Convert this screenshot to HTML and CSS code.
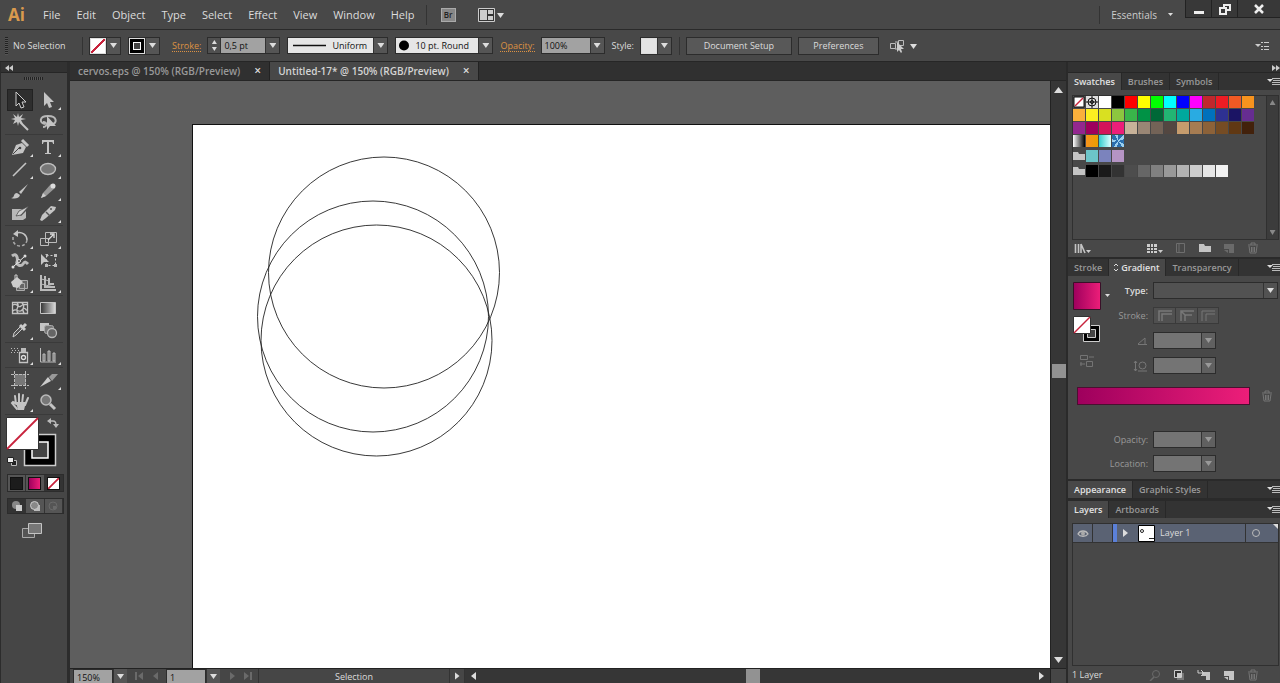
FILE: index.html
```html
<!DOCTYPE html>
<html lang="en">
<head>
<meta charset="utf-8">
<title>Untitled-17* @ 150% (RGB/Preview)</title>
<link rel="stylesheet" href="styles.css">
</head>
<body>
<svg class="sprite" aria-hidden="true">
  <symbol id="menu" viewBox="0 0 13 9"><path d="M0 2h6L3 5z" fill="#ddd"/><path d="M5 1.5h8M6 3.5h7M5 5.5h8M5 7.5h8" stroke="#bbb"/></symbol>
  <symbol id="trash" viewBox="0 0 12 12"><path d="M1 3h10M4 3V1h4v2M2 4l1 7h6l1-7M4.500 5v5M6 5v5M7.500 5v5" fill="none" stroke="#757575"/></symbol>
  <symbol id="folder" viewBox="0 0 12 10"><path d="M0 1h5l1 2h6v6H0z" fill="#c4c4c4"/></symbol>
  <symbol id="page" viewBox="0 0 12 12"><path d="M1 2h10v9H6V7H1z" fill="currentColor"/><path d="M1 8h4v3z" fill="currentColor"/></symbol>
</svg>

<header class="menubar">
  <span class="logo">Ai</span>
  <nav class="menus">
    <button>File</button><button>Edit</button><button>Object</button><button>Type</button><button>Select</button><button>Effect</button><button>View</button><button>Window</button><button>Help</button>
  </nav>
  <button class="bridge">Br</button>
  <button class="arrange" aria-label="Arrange documents"><svg width="26" height="14" viewBox="0 0 26 14"><path d="M.5.500h16v13H.500z" fill="#333" stroke="#ccc"/><path d="M2 2h7v10H2zM10 2h5v4h-5zM10 8h5v4h-5z" fill="#ccc"/><path d="M19 5h7l-3.500 5z" fill="#ddd"/></svg></button>
  <button class="workspace">Essentials<i class="tri small"></i></button>
  <div class="window-buttons">
    <button aria-label="Minimize"><svg width="12" height="12"><path d="M1 8h10v3H1z" fill="#eee"/></svg></button>
    <button aria-label="Restore"><svg width="12" height="12" fill="none" stroke="#eee" stroke-width="2"><path d="M5 5V2h6v5H8"/><path d="M1 5h6v6H1z"/></svg></button>
    <button aria-label="Close" class="close"><svg width="12" height="12"><path d="M2 2l8 8M10 2l-8 8" stroke="#eee" stroke-width="2.500"/></svg></button>
  </div>
</header>

<section class="controlbar">
  <i class="grip"></i>
  <span class="selection">No Selection</span>
  <button class="swatch-drop" aria-label="Fill"><i class="chip none"></i><b><i class="tri"></i></b></button>
  <button class="swatch-drop" aria-label="Stroke color"><i class="chip ring"></i><b><i class="tri"></i></b></button>
  <label class="link stroke-label" for="weight">Stroke:</label>
  <div class="field"><button class="spin" aria-label="Step weight"><i class="tri up"></i><i class="tri"></i></button><input id="weight" class="weight" value="0,5 pt"><button class="arrow" aria-label="Weights"><i class="tri"></i></button></div>
  <div class="field profile"><svg width="38" height="15"><path d="M5 7.500h33" stroke="#111" stroke-width="1.500"/></svg><select aria-label="Width profile"><option>Uniform</option></select><span class="arrow"><i class="tri"></i></span></div>
  <div class="field brush"><svg width="15" height="15"><circle cx="8" cy="7.500" r="5" fill="#000"/></svg><select aria-label="Brush"><option>10 pt. Round</option></select><span class="arrow"><i class="tri"></i></span></div>
  <label class="link" for="opacity">Opacity:</label>
  <div class="field opacity"><input id="opacity" value="100%"><button class="arrow" aria-label="Opacity values"><i class="tri"></i></button></div>
  <span class="style-label">Style:</span>
  <button class="swatch-drop" aria-label="Style"><i class="chip plain"></i><b><i class="tri"></i></b></button>
  <div class="actions"><button class="push setup">Document Setup</button><button class="push">Preferences</button></div>
  <button class="similar" aria-label="Select similar"><svg width="28" height="14" viewBox="0 0 28 14"><path d="M1.500 4.500h5v5h-5zM9.500 1.500h5v5h-5zM6 3h4M6 10h3" fill="none" stroke="#bbb"/><path d="M8 3v10l2-2 2 3 1-1-1-3h3z" fill="#ccc"/><path d="M21 5h7l-3.500 5z" fill="#ddd"/></svg></button>
  <button class="bar-menu" aria-label="Control menu"><svg width="14" height="10"><path d="M0 3h6L3 6z" fill="#ccc"/><path d="M6 1.500h2M6 5.500h2M6 8.500h2M9 1.500h5M9 5.500h5M9 8.500h5" stroke="#ccc"/></svg></button>
</section>

<main class="workarea">
  <aside class="toolbox">
    <div class="dock-head"><svg width="8" height="6"><path d="M4 0v6L0 3zM8 0v6L4 3z" fill="#ccc"/></svg></div>
    <i class="hgrip"></i>
    <div class="tools">
      <div class="group">
        <button class="on" aria-label="Selection"><svg viewBox="0 0 20 20"><path d="M6 2v14l3-3 2 5 3-1-2-5h4z" fill="#222" stroke="#ccc"/></svg></button>
        <button class="fly" aria-label="Direct selection"><svg viewBox="0 0 20 20"><path d="M6 2v14l3-3 2 5 3-1-2-5h4z" fill="#c4c4c4"/></svg></button>
        <button aria-label="Magic wand"><svg viewBox="0 0 20 20"><path d="M8 1l1 4 4-3-2 4 5 1-5 1 2 4-4-2-1 4-1-4-4 2 2-4-4-1 4-1-2-4 4 3z" fill="#c4c4c4"/><path d="M10 10l8 8" stroke="#c4c4c4" stroke-width="2"/></svg></button>
        <button aria-label="Lasso"><svg viewBox="0 0 20 20"><path d="M7 12c-6-1-6-8 3-8 10 0 9 8 4 8M5 10c5 0 4 5 0 5" fill="none" stroke="#b8b8b8" stroke-width="2"/><path d="M9 4v14l3-4h6z" fill="#c4c4c4"/></svg></button>
      </div>
      <div class="group pens">
        <button class="fly" aria-label="Pen"><svg viewBox="0 0 20 20"><path d="M2 18l4-10 6-2 4 4-3 6z" fill="#c4c4c4"/><path d="M3 17l6-6" stroke="#444"/><circle cx="10" cy="11" r="1.300" fill="#444"/><path d="M12 3l6 6" stroke="#c4c4c4" stroke-width="3"/></svg></button>
        <button class="fly type" aria-label="Type"><svg viewBox="0 0 20 20"><path d="M4 3h12v4h-1c0-2-1-2-3-2h-1v10c0 1 0 1 2 1v1H7v-1c2 0 2 0 2-1V5H8C6 5 5 5 5 7H4z" fill="#c4c4c4"/></svg></button>
        <button class="fly" aria-label="Line"><svg viewBox="0 0 20 20"><path d="M3 17L16 4" stroke="#c4c4c4" stroke-width="1.600"/></svg></button>
        <button class="fly" aria-label="Ellipse"><svg viewBox="0 0 20 20"><ellipse cx="10" cy="10" rx="7.500" ry="5.500" fill="#777" stroke="#c0c0c0" stroke-width="1.300"/></svg></button>
        <button aria-label="Paintbrush"><svg viewBox="0 0 20 20"><path d="M18 3l-7 10-2-2z" fill="#c4c4c4"/><path d="M1 17c4 0 2-5 6-5l3 2c-1 4-6 4-9 3z" fill="#c4c4c4"/></svg></button>
        <button class="fly" aria-label="Pencil"><svg viewBox="0 0 20 20"><path d="M3 17l2-5 8-9 4 4-9 8z" fill="#999"/><path d="M3 17l2-5 3 3z" fill="#ccc"/><circle cx="15" cy="5" r="2.500" fill="#ddd"/></svg></button>
        <button aria-label="Blob brush"><svg viewBox="0 0 20 20"><path d="M2 6h12l-5 5 2 2 5-5v7l-3 2H2z" fill="#b8b8b8"/><path d="M19 3l-8 9-5 1 3-5z" fill="#d0d0d0" stroke="#444" stroke-width=".7"/></svg></button>
        <button class="fly" aria-label="Eraser"><svg viewBox="0 0 20 20"><path d="M2 17l2-5 9-9 5 1-1 3-9 8-4 3z" fill="#c4c4c4"/><path d="M8 9l4 4" stroke="#555" stroke-width="1.500"/><circle cx="13" cy="6" r="1" fill="#555"/></svg></button>
      </div>
      <div class="group">
        <button class="fly" aria-label="Rotate"><svg viewBox="0 0 20 20"><path d="M6 4c6-2 11 2 11 7" fill="none" stroke="#c4c4c4" stroke-width="1.500"/><path d="M17 11c-1 8-14 8-14-1V7" fill="none" stroke="#aaa" stroke-width="1.500" stroke-dasharray="3 2"/><path d="M3 5l5-4v7z" fill="#c4c4c4"/></svg></button>
        <button class="fly" aria-label="Scale"><svg viewBox="0 0 20 20"><path d="M7.500 3.500h11v10h-11zM2.500 9.500h8v7h-8z" fill="none" stroke="#bbb"/><path d="M10 11l5-5M12 5h4v4" fill="none" stroke="#ddd" stroke-width="1.300"/></svg></button>
        <button class="fly" aria-label="Width"><svg viewBox="0 0 20 20"><path d="M2 5c5-4 6 3 5 6s4 5 6 2 3-2 5 0" fill="none" stroke="#bbb" stroke-width="3"/><path d="M3 16L15 5" stroke="#eee"/><circle cx="3" cy="16" r="1.500" fill="#ddd"/><circle cx="9" cy="10" r="1.500" fill="#444" stroke="#ddd"/><circle cx="15" cy="5" r="1.500" fill="#ddd"/></svg></button>
        <button aria-label="Free transform"><svg viewBox="0 0 20 20"><path d="M3 3v11l3-3h5z" fill="#c4c4c4"/><path d="M8.500 4.500h9v10h-9z" fill="none" stroke="#ccc" stroke-dasharray="2 2"/><path d="M7 3h3v3M16 3h3v3h-3zM16 13h3v3h-3zM7 13h3v3H7z" fill="#bbb"/></svg></button>
        <button class="fly" aria-label="Shape builder"><svg viewBox="0 0 20 20"><path d="M9.500 7.500h8v8h-8zM6.500 10.500h8v7h-8z" fill="#666" stroke="#aaa"/><path d="M1 9l6-5 6 5-5 6-5-1z" fill="#ccc"/><path d="M5 7V2h2v5" fill="none" stroke="#ccc"/></svg></button>
        <button class="fly" aria-label="Perspective grid"><svg viewBox="0 0 20 20"><path d="M3 2v15h15M7 3v11h10M11 5v6h5" fill="none" stroke="#bbb" stroke-width="2"/><path d="M3 6l9 2M3 11l13 3" stroke="#bbb"/></svg></button>
      </div>
      <div class="group">
        <button aria-label="Mesh"><svg viewBox="0 0 20 20"><path d="M2.500 4.500h15v11h-15zM3 7c4-3 5 4 8 1s4 0 7-2M3 13c3-4 6 3 9-1s4 1 5 0M7 5c4 3-3 6 1 10M12 5c5 4-2 5 2 10" fill="none" stroke="#c4c4c4" stroke-width="1.300"/></svg></button>
        <button aria-label="Gradient"><svg viewBox="0 0 20 20"><defs><linearGradient id="gt"><stop stop-color="#333"/><stop offset="1" stop-color="#ddd"/></linearGradient></defs><path d="M2.500 4.500h15v11h-15z" fill="url(#gt)" stroke="#c4c4c4"/></svg></button>
        <button class="fly" aria-label="Eyedropper"><svg viewBox="0 0 20 20"><path d="M3 17l1-4 7-7 2 2-7 7z" fill="#555" stroke="#ccc"/><path d="M10 5l5 5M12 8l4-4" stroke="#ccc" stroke-width="3"/></svg></button>
        <button aria-label="Blend"><svg viewBox="0 0 20 20"><path d="M2 3h9v8H2z" fill="#c4c4c4"/><rect x="6.500" y="5.500" width="9" height="8" rx="2" fill="#777" stroke="#aaa"/><circle cx="14" cy="13" r="4.500" fill="#666" stroke="#bbb" stroke-width="1.300"/></svg></button>
      </div>
      <div class="group">
        <button class="fly" aria-label="Symbol sprayer"><svg viewBox="0 0 20 20"><path d="M9.500 7.500h8v10h-8z" fill="#444" stroke="#c4c4c4" stroke-width="1.300"/><path d="M11 3h5v4h-5z" fill="#bbb"/><circle cx="13.500" cy="12.500" r="2" fill="none" stroke="#ddd" stroke-width="1.300"/><path d="M1 3.500h9M2 5.500h8M1 7.500h7" stroke="#bbb" stroke-dasharray="1 2"/></svg></button>
        <button class="fly" aria-label="Column graph"><svg viewBox="0 0 20 20"><path d="M2.500 3v14H18" fill="none" stroke="#bbb"/><path d="M5 9h2v7H5zM10 6h2v10h-2zM15 8h2v8h-2z" fill="#777" stroke="#bbb"/></svg></button>
      </div>
      <div class="group">
        <button aria-label="Artboard"><svg viewBox="0 0 20 20"><path d="M5 4h11v11H5z" fill="#777"/><path d="M4.500 1v18M15.500 1v18M1 4.500h18M1 15.500h18" stroke="#bbb" stroke-dasharray="3 1"/></svg></button>
        <button class="fly" aria-label="Slice"><svg viewBox="0 0 20 20"><path d="M2 17L10 7l3 4z" fill="#ccc"/><path d="M11 7l3-3h6l-6 7z" fill="#999"/></svg></button>
        <button class="fly" aria-label="Hand"><svg viewBox="0 0 20 20"><path d="M7 17L2 11l1-1 4 2M6 12L5 4M9 12V2M12 12l1-9M15 13l3-7" fill="none" stroke="#c4c4c4" stroke-width="2" stroke-linecap="round"/><path d="M6 10h10l-2 8H8z" fill="#c4c4c4"/></svg></button>
        <button aria-label="Zoom"><svg viewBox="0 0 20 20"><circle cx="8" cy="8" r="5" fill="#777" stroke="#bbb" stroke-width="1.500"/><path d="M12 12l5 5" stroke="#c4c4c4" stroke-width="3"/></svg></button>
      </div>
      <svg class="paint" width="58" height="54" viewBox="0 0 58 54">
        <path d="M19.500 18.500h31v31h-31z" fill="#000" stroke="#ccc" stroke-width="1.500"/><path d="M27 26h16v16H27z" fill="#444" stroke="#fff" stroke-width="1.500"/>
        <path d="M1.500 1.500h32v32h-32z" fill="#fff" stroke="#333"/><path d="M2 33L33 2" stroke="#c8233c" stroke-width="1.800"/>
        <path d="M45 5h3c2 0 3 1 3 4" fill="none" stroke="#bbb" stroke-width="1.300"/><path d="M42 5l4-3v6zM48 8h6l-3 4z" fill="#bbb"/>
        <path d="M6.500 44.500h5v5h-5z" fill="#222" stroke="#bbb"/><path d="M2.500 41.500h6v5h-6z" fill="#eee" stroke="#222"/>
      </svg>
      <div class="seg">
        <button aria-label="Color"><i class="sq dark"></i></button><button aria-label="Gradient fill"><i class="sq pink"></i></button><button class="down" aria-label="None"><i class="sq none"></i></button>
      </div>
      <div class="seg modes">
        <button class="down" aria-label="Draw normal"><svg width="12" height="12"><circle cx="5" cy="5" r="4" fill="#888"/><path d="M5 5h6v6H5z" fill="#ccc"/></svg></button><button aria-label="Draw behind"><svg width="12" height="12"><path d="M5 5h6v6H5z" fill="#bbb"/><circle cx="5.500" cy="5.500" r="4" fill="#888" stroke="#ccc"/></svg></button><button aria-label="Draw inside"><svg width="12" height="12"><circle cx="6" cy="6" r="4" fill="none" stroke="#6a6a6a"/><path d="M6 6h3v3H6z" fill="#6a6a6a"/></svg></button>
      </div>
      <button class="screen" aria-label="Screen mode"><svg width="22" height="17"><path d="M1.500 6.500h12v9h-12z" fill="#555" stroke="#aaa"/><path d="M7.500 1.500h13v10h-13z" fill="#777" stroke="#c4c4c4"/></svg></button>
    </div>
  </aside>

  <section class="document">
    <div class="doc-tabs">
      <button>cervos.eps @ 150% (RGB/Preview)<span>×</span></button><button class="active">Untitled-17* @ 150% (RGB/Preview)<span>×</span></button>
    </div>
    <div class="canvas">
      <div class="artboard">
        <svg width="340" height="360" fill="none" stroke="#222" stroke-width=".9"><circle cx="191" cy="147.500" r="115.500"/><circle cx="180" cy="191.500" r="115.500"/><circle cx="183.500" cy="215.500" r="115.500"/></svg>
      </div>
      <div class="vscroll"><i class="tri up"></i><i class="thumb"></i><i class="tri"></i></div>
    </div>
    <footer class="status">
      <input class="zoom" aria-label="Zoom level" value="150%"><button class="arrow" aria-label="Zoom levels"><i class="tri"></i></button>
      <button class="nav" aria-label="Previous artboard"><svg width="26" height="8"><path d="M1 0h2v8H1zM9 0v8L4 4zM24 0v8l-5-4z" fill="#6a6a6a"/></svg></button>
      <input class="board" aria-label="Artboard" value="1"><button class="arrow" aria-label="Artboards"><i class="tri"></i></button>
      <button class="nav next" aria-label="Next artboard"><svg width="26" height="8"><path d="M2 0v8l5-4zM16 0v8l5-4zM22 0h2v8h-2z" fill="#6a6a6a"/></svg></button>
      <span class="info">Selection</span>
      <button class="play" aria-label="Status menu"><i class="tri right"></i></button>
      <div class="hscroll"><i class="tri left"></i><i class="thumb"></i><i class="tri right"></i></div>
      <i class="corner"></i>
    </footer>
  </section>

  <aside class="panels">
    <div class="dock-head right"><svg width="8" height="6"><path d="M0 0v6l4-3zM4 0v6l4-3z" fill="#ccc"/></svg></div>
    <section class="panel">
      <div class="tabs"><button class="active">Swatches</button><button>Brushes</button><button>Symbols</button><svg class="pm"><use href="#menu"/></svg></div>
      <div class="swatch-body">
        <div class="swatch-box"><div class="swatches"></div><div class="mini-scroll"><i class="tri up"></i><i class="tri"></i></div></div>
        <div class="tools-row">
          <svg width="17" height="11"><path d="M1.500 1v9M4.500 1v9M7 1l4 9M7 1v9" stroke="#c4c4c4" stroke-width="1.600"/><path d="M12 7h5l-2.500 3z" fill="#ccc"/></svg>
          <svg class="push-right" width="17" height="11"><path d="M1 1h10v9H1z" fill="#ccc"/><path d="M4.500 1v9M7.500 1v9M1 4.500h10M1 7.500h10" stroke="#444"/><path d="M12 7h5l-2.500 3z" fill="#ccc"/></svg>
          <svg width="12" height="12"><path d="M1.500 1.500h8v9h-8zM4 1v10" fill="none" stroke="#6e6e6e"/></svg>
          <svg width="12" height="10"><use href="#folder"/></svg>
          <svg class="dim" width="12" height="12"><use href="#page"/></svg>
          <svg width="12" height="12"><use href="#trash"/></svg>
        </div>
      </div>
    </section>
    <section class="panel">
      <div class="tabs"><button>Stroke</button><button class="active grad"><svg width="6" height="9"><path d="M1 3l2-2 2 2M1 6l2 2 2-2" fill="none" stroke="#ddd"/></svg>Gradient</button><button>Transparency</button><svg class="pm"><use href="#menu"/></svg></div>
      <div class="gradient-body">
        <div class="form">
          <svg class="preview" width="40" height="88" viewBox="0 0 40 88"><defs><linearGradient id="pk"><stop stop-color="#9e005d"/><stop offset="1" stop-color="#ed1e79"/></linearGradient></defs>
            <path d="M.5.500h27v27H.500z" fill="url(#pk)" stroke="#3a1028"/><path d="M32 12h5l-2.500 3z" fill="#ddd"/>
            <path d="M10.500 43.500h16v16h-16z" fill="#000" stroke="#ccc"/><path d="M14.500 47.500h8v8h-8z" fill="#444" stroke="#ccc"/><path d="M.5 34.500h17v17H.500z" fill="#fff" stroke="#333"/><path d="M1 51l16-16" stroke="#c8233c" stroke-width="1.500"/>
            <path d="M7.500 73.500h7v4h-7zM13.500 79.500h6v5h-6zM16 75h5M7 82h5M8 80v4" fill="none" stroke="#747474"/></svg>
          <label class="lit" for="gtype">Type:</label><div class="field wide"><select id="gtype"><option></option></select><span class="arrow"><i class="tri"></i></span></div>
          <span>Stroke:</span><div class="joins"><button aria-label="Within stroke"><svg width="16" height="13"><path d="M2 12V2h13M5 12V5h10" fill="none" stroke="#777" stroke-width="1.500"/></svg></button><button aria-label="Along stroke"><svg width="16" height="13"><path d="M2 12V2h13M6 12V6h7M2 2l5 5" fill="none" stroke="#777" stroke-width="1.500"/></svg></button><button aria-label="Across stroke"><svg width="16" height="13"><path d="M2 12V2h13M6 12V5h9" fill="none" stroke="#777"/></svg></button></div>
          <span><svg width="11" height="10"><path d="M1 8.500h9M1 8l7-6v7" fill="none" stroke="#777"/></svg></span><div class="field off"><input aria-label="Angle"><span class="arrow"><i class="tri"></i></span></div>
          <span><svg width="15" height="12"><path d="M2.500 1v10M1 3l1.500-2L4 3M1 9l1.500 2L4 9M5 11h9" fill="none" stroke="#777"/><circle cx="9.500" cy="5.500" r="3.500" fill="none" stroke="#777"/></svg></span><div class="field off"><input aria-label="Aspect ratio"><span class="arrow"><i class="tri"></i></span></div>
        </div>
        <div class="ramp-row"><div class="ramp"></div><svg width="12" height="12"><use href="#trash"/></svg></div>
        <div class="form lower">
          <label for="gop">Opacity:</label><div class="field off"><input id="gop"><span class="arrow"><i class="tri"></i></span></div>
          <label for="gloc">Location:</label><div class="field off"><input id="gloc"><span class="arrow"><i class="tri"></i></span></div>
        </div>
      </div>
    </section>
    <section class="panel">
      <div class="tabs"><button class="active">Appearance</button><button>Graphic Styles</button><svg class="pm"><use href="#menu"/></svg></div>
    </section>
    <section class="panel layers">
      <div class="tabs"><button class="active">Layers</button><button>Artboards</button><svg class="pm"><use href="#menu"/></svg></div>
      <div class="layers-body">
        <div class="layer-list">
          <div class="layer">
            <button class="eye" aria-label="Visibility"><svg width="12" height="9"><path d="M1 5c2-4 8-4 10 0-2 3-8 3-10 0z" fill="none" stroke="#bbb" stroke-width="1.300"/><circle cx="6" cy="4.500" r="2" fill="#aaa"/></svg></button>
            <button class="lock" aria-label="Lock"></button>
            <i class="mark"></i><i class="tri right"></i>
            <svg class="thumbnail" width="17" height="17"><path d="M.5.500h16v16H.500z" fill="#fff" stroke="#000"/><circle cx="4" cy="6" r="1.500" fill="none" stroke="#222"/><path d="M11 13.500h5" stroke="#222"/></svg>
            <span class="name">Layer 1</span>
            <button class="target" aria-label="Target"><svg width="10" height="10"><circle cx="5" cy="5" r="3.500" fill="none" stroke="#bbb"/></svg></button>
            <i class="selected-art"></i>
          </div>
        </div>
        <div class="tools-row layer-tools">
          <span>1 Layer</span>
          <svg class="push-right" width="12" height="12"><circle cx="7" cy="5" r="3.500" fill="none" stroke="#6a6a6a"/><path d="M5 8l-4 4" stroke="#6a6a6a" stroke-width="1.500"/></svg>
          <svg width="12" height="12"><path d="M4 4h7v7H4z" fill="#777"/><path d="M1.500 1.500h7v7h-7z" fill="#333" stroke="#ccc"/><path d="M4 4h4v4H4z" fill="#ccc"/></svg>
          <svg width="14" height="12"><path d="M5 3h8v8H9V7H5z" fill="#c4c4c4"/><path d="M1 1v3h5M4 1l3 3-3 3" fill="none" stroke="#ccc"/></svg>
          <svg class="bright" width="12" height="12"><use href="#page"/></svg>
          <svg width="12" height="12"><use href="#trash"/></svg>
        </div>
      </div>
    </section>
  </aside>
</main>
<script src="script.js"></script>
</body>
</html>
```
FILE: styles.css
```css
* { box-sizing: border-box; }
html, body { height: 100%; }
body {
  margin: 0; display: flex; flex-direction: column; overflow: hidden;
  background: #484848; color: #dcdcdc;
  font: 9px/12px "Open Sans", "Noto Sans", sans-serif;
}
button, input, select { font: inherit; color: inherit; background: none; border: 0; padding: 0; margin: 0; border-radius: 0; }
button { display: inline-flex; align-items: center; justify-content: center; white-space: nowrap; }
input, select { min-width: 0; outline: 0; }
select { appearance: none; }
svg { display: block; flex: none; }
.sprite { position: absolute; width: 0; height: 0; }

.tri { display: block; width: 7px; height: 5px; background: #ddd; clip-path: polygon(0 0, 100% 0, 50% 100%); }
.tri.small { width: 5px; height: 3px; }
.tri.up { clip-path: polygon(50% 0, 100% 100%, 0 100%); }
.tri.right { width: 5px; height: 8px; clip-path: polygon(0 0, 100% 50%, 0 100%); }
.tri.left { width: 5px; height: 8px; clip-path: polygon(100% 0, 100% 100%, 0 50%); }

/* Menu bar */
.menubar { display: flex; align-items: center; height: 30px; flex: none; border-bottom: 1px solid #2a2a2a; font-size: 11px; line-height: 16px; }
.logo { width: 36px; padding-left: 8px; color: #d99a4e; font: bold 17px/24px "Open Sans", sans-serif; }
.menus { display: flex; gap: 16px; padding: 0 11px 0 7px; height: 20px; border-right: 1px solid #333; }
.bridge { width: 15px; height: 14px; margin: 0 22px 0 14px; background: #888; border: 1px solid #aaa; color: #222; font-size: 8px; font-weight: 600; }
.workspace { margin-left: auto; height: 18px; padding: 0 12px 0 11px; gap: 11px; border-left: 1px solid #333; font-size: 10px; color: #ccc; }
.window-buttons { display: flex; align-self: flex-start; height: 18px; border: 1px solid #222; border-width: 0 0 1px 1px; background: #383838; }
.window-buttons button { width: 26px; border-right: 1px solid #222; }
.window-buttons .close { width: 42px; border: 0; }

/* Control bar */
.controlbar { display: flex; align-items: center; height: 32px; flex: none; padding: 0 11px 0 5px; border-bottom: 1px solid #262626; }
.grip { width: 3px; height: 18px; margin-right: 5px; background: repeating-linear-gradient(#222 0 1px, #555 1px 2px); }
.selection { width: 70px; height: 18px; line-height: 18px; border-right: 1px solid #333; margin-right: 6px; white-space: nowrap; }
.swatch-drop { height: 18px; margin-right: 7px; border: 1px solid #2c2c2c; background: #555; }
.swatch-drop b { width: 14px; display: flex; justify-content: center; border-left: 1px solid #333; height: 16px; align-items: center; }
.chip { width: 16px; height: 16px; border: 1px solid #ddd; }
.none { background: linear-gradient(to bottom right, #fff 44%, #c8233c 46% 54%, #fff 56%); }
.ring { background: #fff; border: 1px solid #ddd; box-shadow: inset 0 0 0 3px #000, inset 0 0 0 4px #fff, inset 0 0 0 9px #444; }
.plain { background: #e4e4e4; }
.link { color: #dd9243; border-bottom: 1px dotted #dd9243; line-height: 11px; margin-right: 6px; }
.stroke-label { margin-left: 5px; }
.field { display: flex; height: 17px; border: 1px solid #2c2c2c; background: #a2a2a2; color: #111; margin-right: 7px; align-items: center; }
.field input, .field select { flex: 1; height: 15px; padding: 0 3px; }
.arrow { width: 14px; height: 15px; flex: none; display: flex; align-items: center; justify-content: center; background: #555; border-left: 1px solid #333; }
.spin { width: 13px; height: 15px; flex-direction: column; gap: 3px; background: #505050; border-right: 1px solid #333; }
.spin .tri { width: 5px; height: 4px; }
.field .weight { width: 44px; flex: none; }
.profile { background: #e6e6e6; width: 101px; }
.profile select { padding: 0 0 0 6px; }
.brush { background: #e6e6e6; width: 98px; }
.brush select { padding: 0 0 0 4px; }
.opacity { width: 64px; }
.style-label { margin: 0 6px 0 0; }
.actions { display: flex; gap: 6px; height: 18px; padding-left: 6px; border-left: 1px solid #333; }
.push { width: 81px; background: #585858; border: 1px solid #2c2c2c; }
.push.setup { width: 106px; }
.similar { margin-left: 10px; }
.bar-menu { margin-left: auto; }

/* Work area */
.workarea { display: flex; flex: 1; min-height: 0; }
.dock-head { height: 11px; flex: none; padding: 3px 4px; background: #323232; border-bottom: 1px solid #262626; }
.dock-head.right { display: flex; justify-content: flex-end; padding-right: 0; }

.toolbox { width: 70px; flex: none; border-left: 1px solid #2c2c2c; border-right: 3px solid #2c2c2c; background: #464646; }
.hgrip { display: block; width: 19px; height: 3px; margin: 4px 0 9px 23px; background: repeating-linear-gradient(90deg, #222 0 1px, #555 1px 2px); }
.tools { padding: 0 4px; display: flex; flex-direction: column; }
.group { display: grid; grid-template-columns: 28px 28px; grid-auto-rows: 22px; padding: 0 0 1px 1px; border-bottom: 1px solid #3a3a3a; margin-bottom: 1px; }
.group.pens { margin-bottom: 2px; }
.group button { position: relative; }
.group button.on { background: #2e2e2e; border: 1px solid #222; margin: 0 1px; }
.group svg { width: 20px; height: 20px; }
.fly::after { content: ""; position: absolute; right: 1px; bottom: 1px; width: 3px; height: 3px; background: #ddd; clip-path: polygon(100% 0, 100% 100%, 0 100%); }
.paint { margin: 0 0 4px; }
.seg { display: flex; width: 57px; height: 18px; margin: 0 0 6px 2px; border: 1px solid #2c2c2c; background: #555; }
.seg button { flex: 1; border-right: 1px solid #333; }
.seg .down { background: #333; }
.sq { width: 13px; height: 13px; border: 1px solid #111; }
.dark { background: #1c1c1c; }
.pink, .ramp { background: linear-gradient(90deg, #9e005d, #ed1e79); }
.modes { height: 16px; margin-bottom: 8px; }
.screen { align-self: flex-start; margin-left: 16px; }

.document { flex: 1; min-width: 0; display: flex; flex-direction: column; }
.doc-tabs { display: flex; height: 19px; flex: none; background: #303030; border-bottom: 1px solid #262626; font-size: 10px; font-weight: 600; color: #999; }
.doc-tabs button { padding: 0 8px; border-right: 1px solid #222; gap: 14px; }
.doc-tabs span { font-size: 12px; color: #ddd; }
.doc-tabs .active { background: #484848; color: #d4d4d4; }
.canvas { flex: 1; min-height: 0; display: flex; background: #5e5e5e; }
.artboard { flex: 1; margin: 43px 0 0 122px; background: #fff; border: 1px solid #111; border-width: 1px 0 0 1px; overflow: hidden; }
.vscroll { width: 16px; display: flex; flex-direction: column; align-items: center; justify-content: space-between; padding: 6px 0 5px; background: #363636; border-left: 1px solid #222; }
.vscroll .tri { width: 9px; height: 6px; }
.thumb { background: #929292; }
.vscroll .thumb { width: 14px; height: 14px; margin-bottom: 8px; }
.status { display: flex; height: 15px; flex: none; border-top: 1px solid #222; background: #464646; padding-left: 3px; }
.status input { height: 15px; background: #a2a2a2; border: 1px solid #2c2c2c; padding: 2px 3px 0; color: #111; }
.zoom { width: 40px; }
.board { width: 40px; }
.nav { margin: 0 6px 0 7px; }
.nav.next { margin: 0 4px 0 8px; }
.info { flex: 0 1 191px; text-align: center; line-height: 16px; border-left: 1px solid #333; }
.play { width: 16px; border: 1px solid #333; border-width: 0 1px; }
.hscroll { flex: 1; display: flex; align-items: center; justify-content: space-between; padding: 0 6px; background: #363636; }
.hscroll .thumb { width: 14px; height: 14px; margin-right: 10px; }
.corner { width: 16px; background: #464646; border-left: 1px solid #222; }

/* Panels */
.panels { width: 214px; flex: none; display: flex; flex-direction: column; border-left: 2px solid #2a2a2a; background: #2a2a2a; gap: 2px; }
.panel { background: #484848; }
.panels .dock-head { margin-bottom: -2px; }
.tabs { display: flex; align-items: center; height: 17px; background: #333; font-weight: 600; color: #999; }
.tabs button { height: 17px; padding: 0 6px; border-right: 1px solid #282828; }
.tabs .active { background: #484848; color: #e2e2e2; }
.tabs .grad { padding: 0 6px 0 4px; gap: 2px; }
.pm { width: 13px; height: 9px; margin-left: auto; }
.swatch-body { padding: 5px 1px 3px 4px; }
.swatch-box { display: flex; height: 145px; border: 1px solid #303030; }
.swatches { flex: 1; }
.swatch-row { display: flex; gap: 1px; height: 12px; margin-bottom: 1px; }
.swatch-row.spaced { margin-top: 3px; }
.swatch-row button { width: 12px; height: 12px; flex: none; }
.mini-scroll { width: 12px; padding: 4px 0; display: flex; flex-direction: column; justify-content: space-between; align-items: center; background: #3c3c3c; border-left: 1px solid #303030; }
.mini-scroll .tri { width: 6px; background: #888; }
.tools-row { display: flex; align-items: center; gap: 12px; padding: 2px 20px 0 2px; }
.push-right { margin-left: auto; }
.dim { color: #6a6a6a; }
.bright { color: #c4c4c4; }
.gradient-body { padding: 6px 2px 7px 5px; }
.form { display: grid; grid-template-columns: 40px 35px 1fr; grid-auto-rows: 17px; gap: 8px 0; align-items: center; color: #999; }
.preview { grid-row: 1 / 5; align-self: start; }
.form > label, .form > span { justify-self: end; grid-column: 2; }
.form > .lit { color: #ddd; font-weight: 600; }
.form .field, .joins { grid-column: 3; margin: 0 0 0 5px; }
.wide { background: #525252; }
.form .wide .arrow { background: #525252; }
.off { width: 63px; background: #747474; }
.off .arrow { background: #606060; }
.off .tri { background: #999; }
.joins { display: flex; height: 17px; }
.joins button { width: 22px; background: #505050; border: 1px solid #3a3a3a; border-right: 0; }
.joins button:last-child { border-right: 1px solid #3a3a3a; }
.ramp-row { display: flex; align-items: center; gap: 11px; margin: 13px 5px 26px 4px; }
.ramp { flex: 1; height: 18px; border: 1px solid #4a1030; }
.lower { row-gap: 7px; }
.layers { flex: 1; min-height: 0; display: flex; flex-direction: column; margin-top: 1px; }
.layers-body { flex: 1; display: flex; flex-direction: column; padding: 5px 1px 2px 4px; }
.layer-list { flex: 1; border: 1px solid #303030; }
.layer { display: flex; align-items: center; height: 19px; background: #5a6273; border-bottom: 1px solid #333; }
.layer button { height: 18px; }
.eye, .lock { width: 20px; border-right: 1px solid #333; }
.mark { width: 4px; height: 18px; background: #5b80d8; margin-right: 6px; }
.thumbnail { margin: 0 5px 0 10px; }
.name { flex: 1; }
.target { width: 20px; border-left: 1px solid #333; justify-content: center; margin-right: 8px; }
.selected-art { width: 5px; height: 5px; align-self: flex-start; background: #ddd; clip-path: polygon(0 0, 100% 0, 100% 100%); }
.layer-tools { padding: 2px 20px 0 0; height: 15px; }
```
FILE: script.js
```js
const rows = [
  ["none", "registration", "#fff", "#000", "#f00", "#ff0", "#0f0", "#0ff", "#00f", "#f0f", "#c1272d", "#ed1c24", "#f15a24", "#f7931e"],
  ["#fbb03b", "#fcee21", "#d9e021", "#8cc63f", "#39b54a", "#009245", "#006837", "#22b573", "#00a99d", "#29abe2", "#0071bc", "#2e3192", "#1b1464", "#662d91"],
  ["#93278f", "#9e005d", "#d4145a", "#ed1e79", "#c7b299", "#998675", "#736357", "#534741", "#c69c6d", "#a67c52", "#8c6239", "#754c24", "#603813", "#42210b"],
  ["linear-gradient(90deg,#fff,#000)", "linear-gradient(90deg,#f7931e,#e8a000)", "linear-gradient(90deg,#3cc,#dff)", "repeating-conic-gradient(#2a6fae 0 12%,#9cd0ee 0 20%)"],
  ["folder", "#6cc5c9", "#7b83bd", "#b594c4"],
  ["folder", "#000", "#1a1a1a", "#333", "#4d4d4d", "#666", "#808080", "#999", "#b3b3b3", "#ccc", "#e6e6e6", "#f2f2f2"]
];
const icons = {
  none: '<svg width="12" height="12"><path d="M1 1h10v10H1z" fill="#fff" stroke="#111"/><path d="M2 10l8-8" stroke="#c8233c" stroke-width="1.5"/></svg>',
  registration: '<svg width="12" height="12"><path d="M0 0h12v12H0z" fill="#ddd"/><g fill="none" stroke="#111"><circle cx="6" cy="6" r="4"/><circle cx="6" cy="6" r="1.5"/><path d="M6 0v12M0 6h12"/></g></svg>',
  folder: '<svg width="12" height="10"><use href="#folder"/></svg>'
};
const host = document.querySelector(".swatches");
rows.forEach((row, i) => {
  const line = document.createElement("div");
  line.className = i > 3 ? "swatch-row spaced" : "swatch-row";
  row.forEach(value => {
    const swatch = document.createElement("button");
    swatch.setAttribute("aria-label", "Swatch");
    if (icons[value]) swatch.innerHTML = icons[value];
    else swatch.style.background = value;
    line.append(swatch);
  });
  host.append(line);
});
```
